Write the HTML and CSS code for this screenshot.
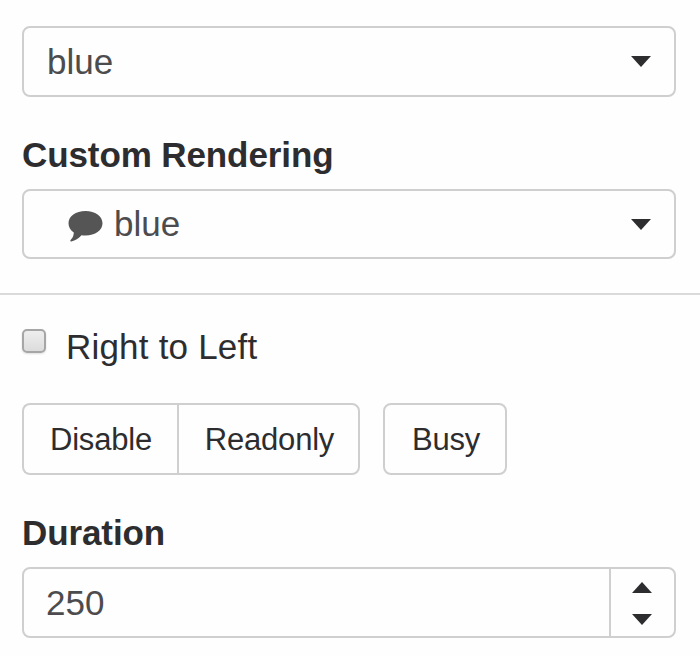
FILE: index.html
```html
<!DOCTYPE html>
<html lang="en">
<head>
<meta charset="utf-8">
<title>Options</title>
<link rel="stylesheet" href="styles.css">
</head>
<body>
<section class="fields">
  <div class="control">
    <span class="value">blue</span>
    <svg class="caret" viewBox="0 0 20 11"><path d="M0 0h20L10 11z"/></svg>
  </div>
  <div class="heading"><span>Custom Rendering</span></div>
  <div class="control control-icon">
    <svg class="comment" viewBox="0 0 35 31"><path d="M17.500 0C27.200 0 34.500 5.200 34.500 12.200S27.200 24.500 17.500 24.500c-1.400 0-2.700-.1-4-.3C10.500 27.500 7.500 29.500 3.300 30.400c-.9.200-1.400-.6-.8-1.200C4 27.600 5.600 26 5.800 21.600 2.500 19.200.5 15.900.5 12.200.5 5.200 7.800 0 17.500 0z"/></svg>
    <span class="value">blue</span>
    <svg class="caret" viewBox="0 0 20 11"><path d="M0 0h20L10 11z"/></svg>
  </div>
</section>
<section class="settings">
  <label class="check"><input type="checkbox"><span class="check-text">Right to Left</span></label>
  <div class="actions">
    <div class="group">
      <button type="button" class="disable"><span>Disable</span></button>
      <button type="button" class="readonly"><span>Readonly</span></button>
    </div>
    <button type="button" class="busy"><span>Busy</span></button>
  </div>
  <div class="heading"><span>Duration</span></div>
  <div class="control spinner">
    <span class="value">250</span>
    <div class="steps">
      <svg class="step" viewBox="0 0 20 11"><path d="M0 11h20L10 0z"/></svg>
      <svg class="step" viewBox="0 0 20 11"><path d="M0 0h20L10 11z"/></svg>
    </div>
  </div>
</section>
</body>
</html>
```
FILE: styles.css
```css
* { box-sizing: border-box; }
body {
  margin: 0;
  background: #fefefe;
  color: #2d2d2f;
  font: 35px/40px "Liberation Sans", Arial, sans-serif;
}
svg { display: block; flex: none; }
.fields {
  height: 295px;
  padding: 26px 24px 0 22px;
  border-bottom: 2px solid #dadada;
}
.settings { padding: 32px 24px 0 22px; }
.control {
  display: flex;
  align-items: center;
  height: 71px;
  padding: 0 23px;
  border: 2px solid #cfcfcf;
  border-radius: 8px;
  background: #fefefe;
}
.control-icon {
  height: 70px;
  padding-left: 44px;
}
.control-icon .value { margin-top: -1px; }
.value { color: #4c4c4e; }
.caret {
  width: 20px;
  height: 11px;
  margin-left: auto;
  fill: #2d2d2f;
}
.comment {
  width: 35px;
  height: 31px;
  margin-right: 11px;
  margin-top: 4px;
  fill: #555;
}
.heading {
  height: 40px;
  margin: 38px 0 14px;
  font-weight: bold;
  letter-spacing: -0.1px;
}
.check {
  display: flex;
  height: 40px;
}
.check input {
  appearance: none;
  width: 24px;
  height: 24px;
  margin: 2px 20px 0 0;
  border: 2px solid #a6a6a6;
  border-radius: 5px;
  background: linear-gradient(#eee, #dcdcdc);
  box-shadow: 0 1px 2px #ddd;
}
.check-text { letter-spacing: 0.2px; }
.actions {
  display: flex;
  gap: 23px;
  margin-top: 36px;
}
.group { display: flex; }
button {
  height: 72px;
  padding: 2px 0 0 1px;
  border: 2px solid #cfcfcf;
  border-radius: 8px;
  background: #fefefe;
  color: inherit;
  font: 31px/36px "Liberation Sans", Arial, sans-serif;
  letter-spacing: -0.2px;
}
.disable {
  width: 155px;
  border-right: 0;
  border-radius: 8px 0 0 8px;
}
.readonly {
  width: 183px;
  padding-left: 2px;
  border-radius: 0 8px 8px 0;
}
.busy {
  width: 124px;
  padding-left: 2px;
}
.spinner {
  padding-left: 22px;
  padding-right: 0;
}
.steps {
  display: flex;
  flex-direction: column;
  align-items: center;
  justify-content: center;
  gap: 21px;
  width: 65px;
  height: 100%;
  margin-left: auto;
  padding: 2px 1px 0 0;
  border-left: 2px solid #cfcfcf;
}
.step {
  width: 20px;
  height: 11px;
  fill: #2d2d2f;
}
```
